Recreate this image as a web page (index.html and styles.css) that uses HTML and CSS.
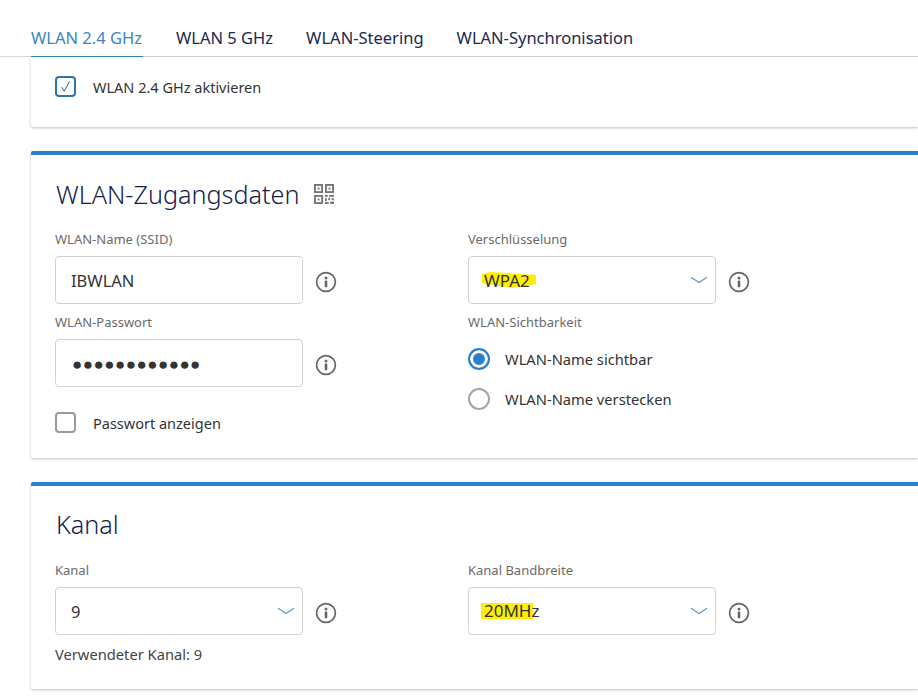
FILE: index.html
```html
<!DOCTYPE html>
<html lang="de">
<head>
    <meta charset="UTF-8">
    <meta name="viewport" content="width=device-width, initial-scale=1.0">
    <title>WLAN 2.4 GHz</title>
    <link rel="stylesheet" href="styles.css">
</head>
<body>
    <svg class="icon-defs" width="0" height="0">
        <symbol id="info" viewBox="0 0 22 22">
            <circle cx="11" cy="11" r="9.4" fill="none" stroke="#666" stroke-width="1.7"/>
            <circle cx="11" cy="6.9" r="1.5" fill="#666"/>
            <rect x="9.7" y="9.6" width="2.6" height="6.6" rx="0.4" fill="#666"/>
        </symbol>
        <symbol id="chevron" viewBox="0 0 18 8">
            <path d="M1 1.2 L9 6.6 L17 1.2" fill="none" stroke="#5a9bd0" stroke-width="1.2"/>
        </symbol>
    </svg>

    <nav class="tabs">
        <a class="tab active">WLAN 2.4 GHz</a>
        <a class="tab">WLAN 5 GHz</a>
        <a class="tab">WLAN-Steering</a>
        <a class="tab">WLAN-Synchronisation</a>
    </nav>

    <div class="content">
        <section class="card card-plain">
            <label class="check-row">
                <span class="checkbox checked">
                    <svg width="13" height="13" viewBox="0 0 13 13"><path d="M2.6 7.2 L5.2 11 L10.6 1.4" fill="none" stroke="#2f7fc1" stroke-width="1.1"/></svg>
                </span>
                WLAN 2.4 GHz aktivieren
            </label>
        </section>

        <section class="card card-wlan">
            <h2 class="card-title">
                WLAN-Zugangsdaten
                <svg class="qr" width="20" height="20" viewBox="0 0 21 21">
                    <g fill="none" stroke="#777" stroke-width="2">
                        <rect x="1" y="1" width="7.5" height="7.5"/>
                        <rect x="12.5" y="1" width="7.5" height="7.5"/>
                        <rect x="1" y="12.5" width="7.5" height="7.5"/>
                    </g>
                    <g fill="#777">
                        <rect x="3.8" y="3.8" width="2" height="2"/>
                        <rect x="15.3" y="3.8" width="2" height="2"/>
                        <rect x="3.8" y="15.3" width="2" height="2"/>
                        <rect x="11.5" y="11.5" width="3" height="2"/>
                        <rect x="16" y="11.5" width="5" height="2"/>
                        <rect x="11.5" y="15" width="2" height="3"/>
                        <rect x="15" y="14.5" width="2" height="2.5"/>
                        <rect x="18.5" y="15" width="2.5" height="2"/>
                        <rect x="11.5" y="19" width="4" height="2"/>
                        <rect x="17" y="18.5" width="4" height="2.5"/>
                    </g>
                </svg>
            </h2>
            <div class="columns">
                <div class="column">
                    <div class="field-label">WLAN-Name (SSID)</div>
                    <div class="field-row">
                        <div class="input">IBWLAN</div>
                        <svg class="info"><use href="#info"/></svg>
                    </div>
                    <div class="field-label second">WLAN-Passwort</div>
                    <div class="field-row">
                        <div class="input password">●●●●●●●●●●●●</div>
                        <svg class="info"><use href="#info"/></svg>
                    </div>
                    <label class="check-row show-password">
                        <span class="checkbox"></span>
                        Passwort anzeigen
                    </label>
                </div>
                <div class="column">
                    <div class="field-label">Verschlüsselung</div>
                    <div class="field-row">
                        <div class="input select">
                            <span class="marked">
                                <svg class="scribble" width="55" height="16" viewBox="0 0 55 16"><path d="M0 2 L8 0 L54 3 L54 12 L30 16 L12 13 L0 11 Z" fill="#ffee00"/></svg>
                                <span class="marked-text">WPA2</span>
                            </span>
                            <svg class="chevron"><use href="#chevron"/></svg>
                        </div>
                        <svg class="info"><use href="#info"/></svg>
                    </div>
                    <div class="field-label second">WLAN-Sichtbarkeit</div>
                    <label class="radio-row first">
                        <span class="radio on"></span>
                        WLAN-Name sichtbar
                    </label>
                    <label class="radio-row">
                        <span class="radio"></span>
                        WLAN-Name verstecken
                    </label>
                </div>
            </div>
        </section>

        <section class="card card-kanal">
            <h2 class="card-title">Kanal</h2>
            <div class="columns">
                <div class="column">
                    <div class="field-label">Kanal</div>
                    <div class="field-row">
                        <div class="input select">
                            9
                            <svg class="chevron"><use href="#chevron"/></svg>
                        </div>
                        <svg class="info"><use href="#info"/></svg>
                    </div>
                    <div class="used-channel">Verwendeter Kanal: 9</div>
                </div>
                <div class="column">
                    <div class="field-label">Kanal Bandbreite</div>
                    <div class="field-row">
                        <div class="input select">
                            <span class="bandwidth"><span class="highlight">20MH</span>z</span>
                            <svg class="chevron"><use href="#chevron"/></svg>
                        </div>
                        <svg class="info"><use href="#info"/></svg>
                    </div>
                </div>
            </div>
        </section>
    </div>
</body>
</html>
```

FILE: styles.css
```css
html, body {
    margin: 0;
    height: 696px;
    overflow: hidden;
}

body {
    font-family: 'Noto Sans', sans-serif;
    background-color: #fff;
    color: #333;
}

.icon-defs {
    position: absolute;
}

.tabs {
    display: flex;
    gap: 33px;
    height: 56px;
    padding-left: 31px;
    border-bottom: 1px solid #d9d9d9;
}

.tab {
    height: 57px;
    box-sizing: border-box;
    padding-top: 26px;
    font-size: 16.5px;
    line-height: 24px;
    color: #1b2a4e;
}

.tab.active {
    width: 112px;
    color: #3b87c4;
    border-bottom: 1px solid #3b87c4;
}

.content {
    display: flex;
    flex-direction: column;
    gap: 24px;
    margin-left: 31px;
}

.card {
    background-color: #fff;
    border-radius: 2px 0 0 2px;
    box-shadow: 0 1px 3px rgba(0,0,0,0.25);
    padding: 0 24px;
    box-sizing: border-box;
}

.card-plain {
    height: 70px;
    padding-top: 19px;
}

.card-wlan {
    height: 307px;
    border-top: 4px solid #2a7fd0;
}

.card-kanal {
    height: 207px;
    border-top: 4px solid #2a7fd0;
}

.card-title {
    display: flex;
    align-items: center;
    gap: 14px;
    margin: 0;
    padding: 21px 0 0 1px;
    height: 36px;
    font-size: 25.2px;
    font-weight: 300;
    line-height: 36px;
    color: #14224a;
}

.card-kanal .card-title {
    padding-top: 20px;
}

.columns {
    display: grid;
    grid-template-columns: 413px 1fr;
    margin-top: 18px;
}

.card-kanal .columns {
    margin-top: 19px;
}

.field-label {
    font-size: 13px;
    line-height: 18px;
    height: 18px;
    margin-bottom: 8px;
    color: #6b6b6b;
}

.field-label.second {
    margin-top: 9px;
}

.field-row {
    display: flex;
    align-items: center;
    gap: 12px;
}

.input {
    display: flex;
    align-items: center;
    justify-content: space-between;
    width: 248px;
    height: 48px;
    box-sizing: border-box;
    padding: 0 7px 0 15px;
    background-color: #fff;
    border: 1px solid #d2d2d2;
    border-radius: 4px;
    font-size: 16.5px;
    color: #333;
}

.input.password {
    font-size: 17px;
    letter-spacing: 0.47px;
    padding-left: 16px;
    justify-content: flex-start;
}

.info {
    width: 22px;
    height: 22px;
    margin-top: 4px;
    flex: none;
}

.chevron {
    width: 18px;
    height: 8px;
    flex: none;
}

.marked {
    position: relative;
    display: inline-block;
    font-size: 17px;
}

.scribble {
    position: absolute;
    left: -2px;
    top: 3px;
}

.marked-text {
    position: relative;
}

.bandwidth {
    font-size: 17px;
    line-height: 16px;
}

.highlight {
    display: inline-block;
    line-height: 16px;
    background-color: #ffee00;
    padding: 0 2px 0 3px;
    margin: 0 -2px 0 -3px;
}

.check-row {
    display: flex;
    align-items: center;
    gap: 17px;
    font-size: 14.5px;
    color: #333;
}

.checkbox {
    display: flex;
    align-items: center;
    justify-content: center;
    width: 21px;
    height: 21px;
    box-sizing: border-box;
    border: 2px solid #9a9a9a;
    border-radius: 4px;
}

.checkbox.checked {
    border-color: #2f74ab;
}

.show-password {
    margin-top: 25px;
}

.radio-row {
    display: flex;
    align-items: center;
    gap: 15px;
    height: 22px;
    margin-top: 18px;
    font-size: 14.7px;
    color: #333;
}

.radio-row.first {
    margin-top: 17px;
}

.radio {
    width: 22px;
    height: 22px;
    box-sizing: border-box;
    border: 2px solid #a5a5a5;
    border-radius: 50%;
    background-color: #fff;
}

.radio.on {
    border-color: #2a7fd0;
    background-color: #2a7fd0;
    box-shadow: inset 0 0 0 3px #fff;
}

.used-channel {
    margin-top: 9px;
    font-size: 14.7px;
    line-height: 20px;
    color: #444;
}
```
